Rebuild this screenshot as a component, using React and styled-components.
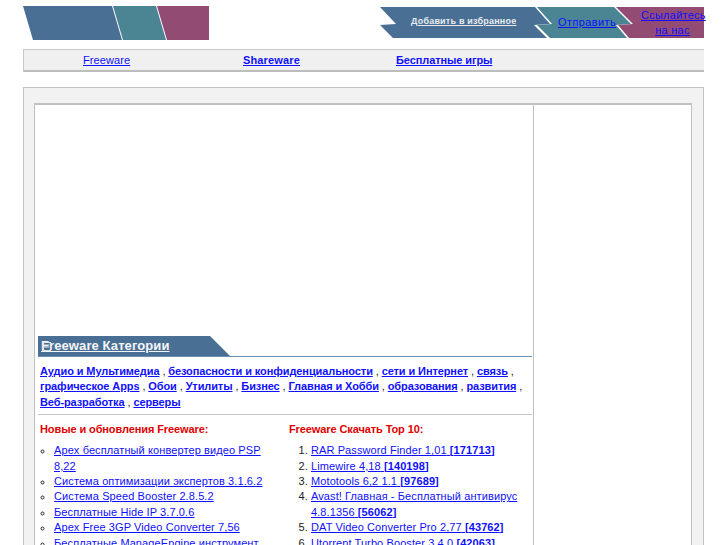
import React from "react";
import styled, { createGlobalStyle } from "styled-components";

const Global = createGlobalStyle`
  html, body {
    margin: 0;
    height: 545px;
    overflow: hidden;
    background: #fff;
  }
  body {
    font-family: "Liberation Sans", Arial, sans-serif;
    font-size: 11px;
    letter-spacing: 0.1px;
    color: #222;
  }
  a { color: #1010ff; }
`;

const Page = styled.div`
  width: 681px;
  margin-left: 23px;
  padding-top: 6px;
`;

const Header = styled.header`
  height: 34px;
  display: flex;
  justify-content: space-between;
`;

const Logo = styled.svg`
  display: block;
  width: 186px;
  height: 34px;
`;

const Banner = styled.div`
  position: relative;
  width: 324px;
  height: 31px;
  margin-top: 1px;
`;

const BannerArt = styled.svg`
  position: absolute;
  inset: 0;
  width: 324px;
  height: 31px;
`;

const BannerLinks = styled.div`
  position: relative;
  height: 31px;
  display: flex;
  align-items: center;
`;

const FavLink = styled.a`
  width: 105px;
  margin-left: 31px;
  color: #e6ebf0;
  font-size: 9px;
  font-weight: bold;
  letter-spacing: 0.2px;
  text-align: center;
  white-space: nowrap;
  transform: translateY(-2px);
`;

const SendLink = styled.a`
  margin-left: 42px;
  width: 60px;
  white-space: nowrap;
  letter-spacing: 0.4px;
  transform: translateY(-1px);
`;

const LinkUs = styled.a`
  margin-left: 24px;
  width: 63px;
  line-height: 15px;
  text-align: center;
  flex: none;
  letter-spacing: 0.25px;
`;

const Nav = styled.nav`
  height: 20px;
  margin-top: 9px;
  border-top: 1px solid #c8c8c8;
  border-bottom: 2px solid #bdbdbd;
  border-left: 1px solid #c8c8c8;
  background: #f0f0f0;
  display: flex;
  align-items: center;
  line-height: 21px;
`;

const NavLink = styled.a`
  width: ${({ $w }) => $w}px;
  margin-left: ${({ $left }) => $left}px;
  font-weight: ${({ $bold }) => ($bold ? "bold" : "normal")};
  letter-spacing: ${({ $ls }) => $ls}px;
  white-space: nowrap;
`;

const Panel = styled.section`
  margin-top: 15px;
  height: 470px;
  width: 681px;
  border: 1px solid #c4c4c4;
  border-bottom: none;
  background: #f2f2f2;
  padding: 15px 11px 0 10px;
  box-sizing: border-box;
`;

const Columns = styled.div`
  height: 460px;
  display: flex;
  background: #fff;
  border: 1px solid #c0c0c0;
  border-bottom: none;
  border-top-width: 2px;
`;

const Main = styled.main`
  width: 499px;
  padding: 231px 0 0 3px;
  box-sizing: border-box;
  border-right: 1px solid #c0c0c0;
`;

const Side = styled.aside`
  flex: 1;
`;

const SectionBar = styled.div`
  position: relative;
  height: 20px;
  width: 494px;
  border-bottom: 1px solid #6b8fb3;
`;

const BarArt = styled.svg`
  position: absolute;
  left: 0;
  top: 0;
  width: 192px;
  height: 20px;
`;

const BarTitle = styled.a`
  position: relative;
  display: block;
  padding-left: 3px;
  line-height: 20px;
  color: #f4f6f8;
  font-size: 13px;
  font-weight: bold;
`;

const BrokenIcon = styled.svg`
  position: absolute;
  left: 4px;
  top: 6px;
  width: 10px;
  height: 10px;
`;

const Categories = styled.div`
  width: 494px;
  box-sizing: border-box;
  padding: 7px 2px 4px 2px;
  line-height: 15.4px;
  border-bottom: 1px solid #c4c4c4;
  font-weight: bold;
  letter-spacing: -0.1px;
`;

const Comma = styled.span`
  font-weight: 400;
`;

const Lists = styled.div`
  display: flex;
  padding-top: 7px;
`;

const ListColumn = styled.div`
  width: ${({ $w }) => $w}px;
  padding: 0 ${({ $right }) => $right}px 0 2px;
  box-sizing: border-box;
`;

const ListTitle = styled.h3`
  margin: 0 0 6px;
  font-size: 11px;
  line-height: 15px;
  font-weight: bold;
  letter-spacing: -0.1px;
  color: #e00000;
`;

const Bullets = styled.ul`
  margin: 0;
  padding: 0 0 0 14px;
  list-style: circle outside;
  line-height: 15.4px;
`;

const Numbers = styled.ol`
  margin: 0;
  padding: 0 0 0 22px;
  line-height: 15.4px;
`;

const categories = [
  ["Аудио и Мультимедиа", "безопасности и конфиденциальности", "сети и Интернет", "связь"],
  ["графическое Apps", "Обои", "Утилиты", "Бизнес", "Главная и Хобби", "образования", "развития"],
  ["Веб-разработка", "серверы"],
];

const news = [
  "Apex бесплатный конвертер видео PSP 8,22",
  "Система оптимизации экспертов 3.1.6.2",
  "Система Speed Booster 2.8.5.2",
  "Бесплатные Hide IP 3.7.0.6",
  "Apex Free 3GP Video Converter 7,56",
  "Бесплатные ManageEngine инструмент",
];

const top = [
  ["RAR Password Finder 1,01", "171713"],
  ["Limewire 4,18", "140198"],
  ["Mototools 6,2 1.1", "97689"],
  ["Avast! Главная - Бесплатный антивирус 4.8.1356", "56062"],
  ["DAT Video Converter Pro 2,77", "43762"],
  ["Utorrent Turbo Booster 3.4.0", "42063"],
];

export default function App() {
  return (
    <>
      <Global />
      <Page>
        <Header>
          <Logo viewBox="0 0 186 34">
            <polygon points="0,0 89,0 99,34 10,34" fill="#4a6f94" />
            <polygon points="90,0 133,0 143,34 100,34" fill="#4b8593" />
            <polygon points="134,0 186,0 186,34 144,34" fill="#924b73" />
          </Logo>
          <Banner>
            <BannerArt viewBox="0 0 324 31">
              <polygon points="0,0 155,0 170,17 154,18 167,31 13,31 0,18 16,17" fill="#4a6f94" />
              <polygon points="157,0 234,0 251,17 236,18 247,31 170,31 157,18 172,17" fill="#4b8593" />
              <polygon points="236,0 324,0 324,31 249,31 238,18 253,17" fill="#924b73" />
            </BannerArt>
            <BannerLinks>
              <FavLink href="#">Добавить в избранное</FavLink>
              <SendLink href="#">Отправить</SendLink>
              <LinkUs href="#">Ссылайтесь на нас</LinkUs>
            </BannerLinks>
          </Banner>
        </Header>
        <Nav>
          <NavLink href="#" $left={59} $w={160} $ls={0.1}>Freeware</NavLink>
          <NavLink href="#" $left={0} $w={153} $ls={0.15} $bold>Shareware</NavLink>
          <NavLink href="#" $left={0} $w={120} $ls={-0.1} $bold>Бесплатные игры</NavLink>
        </Nav>
        <Panel>
          <Columns>
            <Main>
              <SectionBar>
                <BarArt viewBox="0 0 192 20">
                  <polygon points="0,0 172,0 192,20 0,20" fill="#4a6f94" />
                </BarArt>
                <BarTitle href="#">Freeware Категории</BarTitle>
                <BrokenIcon viewBox="0 0 10 10">
                  <rect x="0.5" y="0.5" width="8" height="8" fill="none" stroke="#dfe5ea" />
                  <path d="M2 3h5M2 5h5" stroke="#dfe5ea" />
                </BrokenIcon>
              </SectionBar>
              <Categories>
                {categories.map((row, i) => (
                  <div key={i}>
                    {row.map((name, j) => (
                      <React.Fragment key={name}>
                        <a href="#">{name}</a>
                        {(j < row.length - 1 || i < 2) && <Comma> , </Comma>}
                      </React.Fragment>
                    ))}
                  </div>
                ))}
              </Categories>
              <Lists>
                <ListColumn $w={249} $right={8}>
                  <ListTitle>Новые и обновления Freeware:</ListTitle>
                  <Bullets>
                    {news.map((item) => (
                      <li key={item}><a href="#">{item}</a></li>
                    ))}
                  </Bullets>
                </ListColumn>
                <ListColumn $w={244} $right={0}>
                  <ListTitle>Freeware Скачать Top 10:</ListTitle>
                  <Numbers>
                    {top.map(([name, count]) => (
                      <li key={name}>
                        <a href="#">{name} <b>[{count}]</b></a>
                      </li>
                    ))}
                  </Numbers>
                </ListColumn>
              </Lists>
            </Main>
            <Side />
          </Columns>
        </Panel>
      </Page>
    </>
  );
}
